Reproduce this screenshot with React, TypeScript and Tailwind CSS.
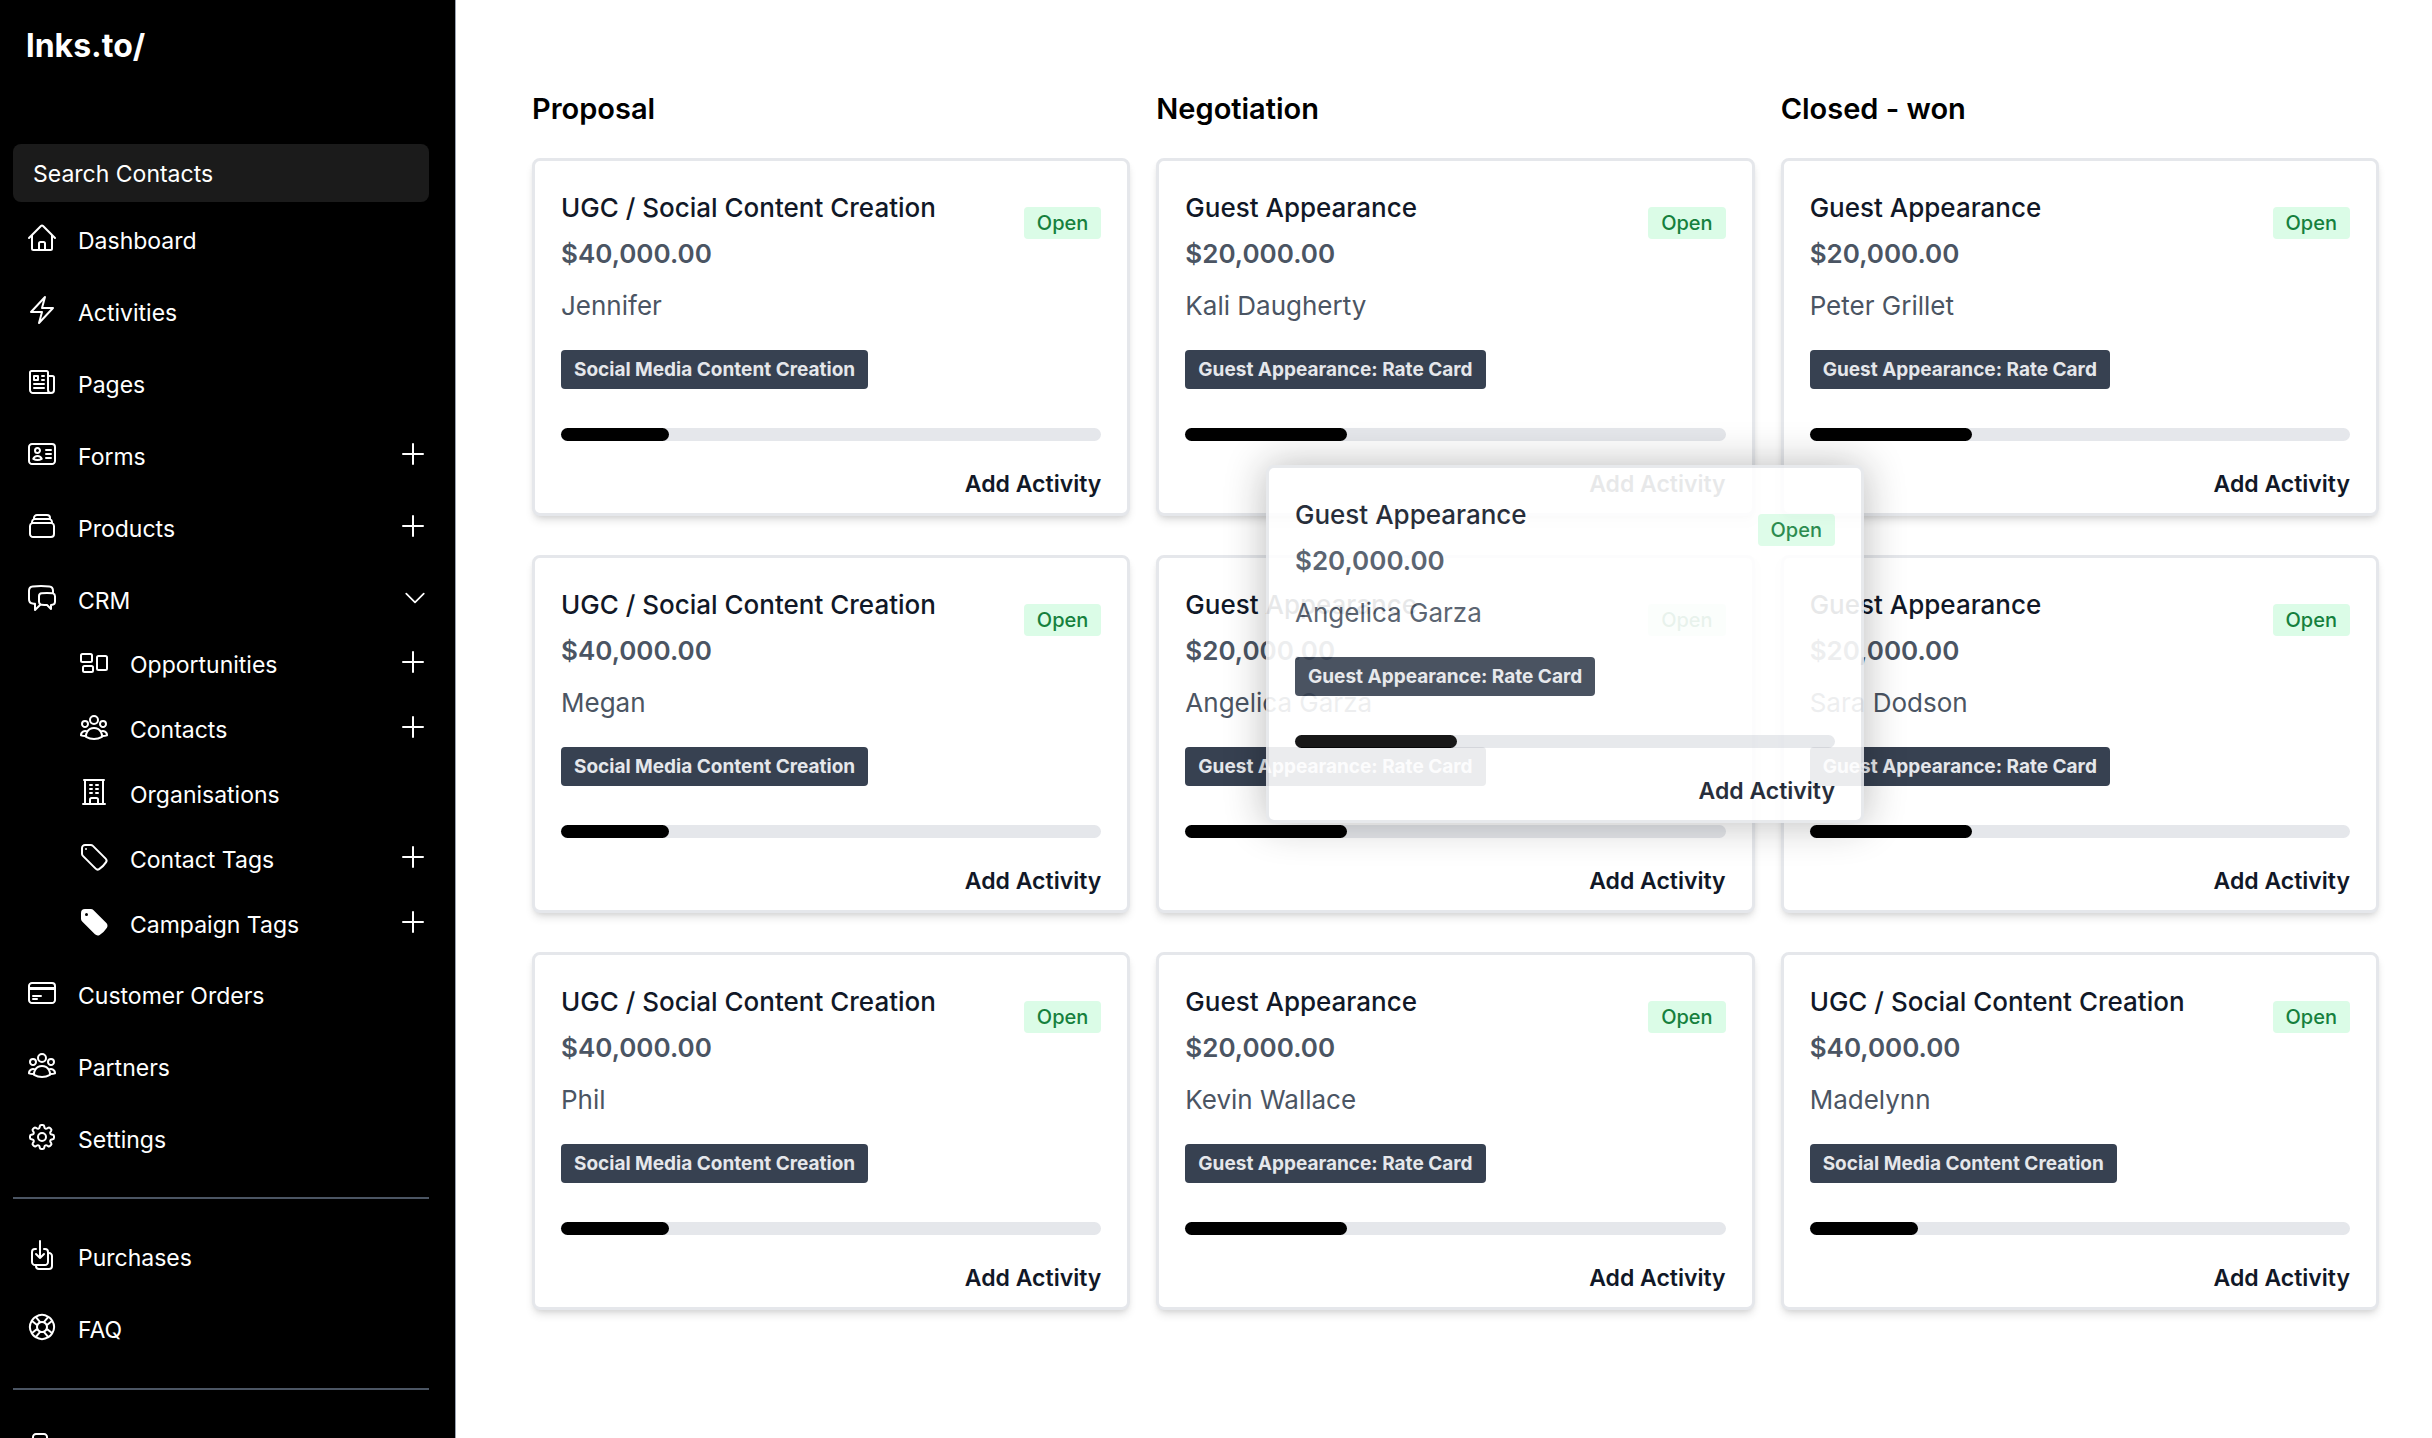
import {
  HiOutlineArrowDownOnSquareStack,
  HiOutlineArrowRightOnRectangle,
  HiOutlineBolt,
  HiOutlineBuildingOffice,
  HiOutlineChatBubbleLeftRight,
  HiOutlineChevronDown,
  HiOutlineCog8Tooth,
  HiOutlineCreditCard,
  HiOutlineHome,
  HiOutlineIdentification,
  HiOutlineLifebuoy,
  HiOutlineNewspaper,
  HiOutlinePlus,
  HiOutlineRectangleGroup,
  HiOutlineRectangleStack,
  HiOutlineTag,
  HiOutlineUserGroup,
  HiTag,
} from "react-icons/hi2";
import type { IconType } from "react-icons";

type NavItem = {
  label: string;
  icon: IconType;
  action?: "add" | "toggle";
  children?: NavItem[];
};

type Deal = {
  title: string;
  amount: string;
  contact: string;
  tag: string;
  progress: number;
};

const mainNav: NavItem[] = [
  { label: "Dashboard", icon: HiOutlineHome },
  { label: "Activities", icon: HiOutlineBolt },
  { label: "Pages", icon: HiOutlineNewspaper },
  { label: "Forms", icon: HiOutlineIdentification, action: "add" },
  { label: "Products", icon: HiOutlineRectangleStack, action: "add" },
  {
    label: "CRM",
    icon: HiOutlineChatBubbleLeftRight,
    action: "toggle",
    children: [
      { label: "Opportunities", icon: HiOutlineRectangleGroup, action: "add" },
      { label: "Contacts", icon: HiOutlineUserGroup, action: "add" },
      { label: "Organisations", icon: HiOutlineBuildingOffice },
      { label: "Contact Tags", icon: HiOutlineTag, action: "add" },
      { label: "Campaign Tags", icon: HiTag, action: "add" },
    ],
  },
  { label: "Customer Orders", icon: HiOutlineCreditCard },
  { label: "Partners", icon: HiOutlineUserGroup },
  { label: "Settings", icon: HiOutlineCog8Tooth },
];

const helpNav: NavItem[] = [
  { label: "Purchases", icon: HiOutlineArrowDownOnSquareStack },
  { label: "FAQ", icon: HiOutlineLifebuoy },
];

const ugc = (contact: string): Deal => ({
  title: "UGC / Social Content Creation",
  amount: "$40,000.00",
  contact,
  tag: "Social Media Content Creation",
  progress: 20,
});

const guest = (contact: string): Deal => ({
  title: "Guest Appearance",
  amount: "$20,000.00",
  contact,
  tag: "Guest Appearance: Rate Card",
  progress: 30,
});

const columns = [
  { name: "Proposal", deals: [ugc("Jennifer"), ugc("Megan"), ugc("Phil")] },
  { name: "Negotiation", deals: [guest("Kali Daugherty"), guest("Angelica Garza"), guest("Kevin Wallace")] },
  { name: "Closed - won", deals: [guest("Peter Grillet"), guest("Sara Dodson"), ugc("Madelynn")] },
];

function NavRow({ item, nested = false }: { item: NavItem; nested?: boolean }) {
  const Icon = item.icon;

  return (
    <div className={nested ? "flex h-[65px] items-start pl-[52px]" : "flex h-[72px] items-start"}>
      <a href="#" className="flex flex-1 items-start gap-5 pl-[13px]">
        <Icon className="size-8 shrink-0" />
        <span className="pt-[3px] text-[23px] leading-8">{item.label}</span>
      </a>
      {item.action === "add" && (
        <button type="button" aria-label={`Add ${item.label}`}>
          <HiOutlinePlus className="size-8" />
        </button>
      )}
      {item.action === "toggle" && (
        <button type="button" aria-label={`Toggle ${item.label}`} className="flex h-8 items-center">
          <HiOutlineChevronDown className="size-7" />
        </button>
      )}
    </div>
  );
}

function Sidebar() {
  return (
    <aside className="w-[456px] shrink-0 overflow-hidden border-r border-gray-400 bg-black pl-[13px] pr-[26px] pt-6 text-white">
      <a href="#" className="block pl-[13px] text-[32px] font-bold leading-[44px]">
        lnks.to/
      </a>

      <input
        type="text"
        aria-label="Search Contacts"
        placeholder="Search Contacts"
        className="mt-19 block h-[58px] w-full rounded-lg bg-[#1b1b1b] px-5 pt-0.5 text-[23px] text-white placeholder:text-white"
      />

      <nav className="mt-5">
        {mainNav.map((item) => (
          <div key={item.label}>
            <NavRow item={item} />
            {item.children && (
              <div className="-mt-2 pb-1.5">
                {item.children.map((child) => (
                  <NavRow key={child.label} item={child} nested />
                ))}
              </div>
            )}
          </div>
        ))}
      </nav>

      <nav className="mt-1 border-y-2 border-[#4b5563] pb-[5px] pt-10">
        {helpNav.map((item) => (
          <NavRow key={item.label} item={item} />
        ))}
      </nav>

      <a href="#" aria-label="Log out" className="block pl-[13px] pt-10">
        <HiOutlineArrowRightOnRectangle className="size-8" />
      </a>
    </aside>
  );
}

function DealCard({ deal, dragging = false }: { deal: Deal; dragging?: boolean }) {
  return (
    <article
      className={
        dragging
          ? "rounded-lg border-3 border-gray-200 bg-white px-[26px] pb-[7px] pt-[27px] opacity-90 shadow-[0_0_40px_rgba(0,0,0,0.3)]"
          : "rounded-lg border-3 border-gray-200 bg-white px-[26px] pb-[7px] pt-[27px] shadow-[0_6px_10px_-2px_rgba(0,0,0,0.12),0_3px_6px_-3px_rgba(0,0,0,0.12)]"
      }
    >
      <div className="flex items-center justify-between">
        <div>
          <h3 className="text-[26px] font-medium leading-[39px] text-[#111827]">{deal.title}</h3>
          <p className="mt-[7px] text-[26px] font-semibold leading-[39px] text-[#4b5563]">{deal.amount}</p>
        </div>
        <span className="mb-4 rounded-sm bg-green-100 px-[13px] text-[20px] font-medium leading-8 text-[#15803d]">
          Open
        </span>
      </div>
      <p className="mt-[13px] text-[26px] leading-[39px] text-[#4b5563]">{deal.contact}</p>
      <div className="mt-[25px] flex">
        <span className="rounded-sm bg-[#374151] px-[13px] text-[19px] font-bold leading-[39px] text-gray-200">
          {deal.tag}
        </span>
      </div>
      <div className="mt-[39px] h-[13px] rounded-full bg-gray-200">
        <div className="h-full rounded-full bg-black" style={{ width: `${deal.progress}%` }} />
      </div>
      <div className="mt-[22px] flex justify-end">
        <button type="button" className="text-[23px] font-semibold leading-[43px] text-[#111827]">
          Add Activity
        </button>
      </div>
    </article>
  );
}

export default function App() {
  return (
    <div className="flex h-screen overflow-hidden bg-white font-['Inter',sans-serif]">
      <Sidebar />

      <main className="relative flex-1 pl-[76px] pr-[53px] pt-[86px]">
        <div className="grid grid-cols-3 gap-[26px]">
          {columns.map((column) => (
            <section key={column.name}>
              <h2 className="text-[29px] font-semibold leading-[46px] text-black">{column.name}</h2>
              <div className="mt-[26px] grid gap-[39px]">
                {column.deals.map((deal) => (
                  <DealCard key={deal.contact} deal={deal} />
                ))}
              </div>
            </section>
          ))}
        </div>

        {/* Card being dragged between columns */}
        <div className="absolute left-[810px] top-[465px] w-[598px]">
          <DealCard deal={guest("Angelica Garza")} dragging />
        </div>
      </main>
    </div>
  );
}
